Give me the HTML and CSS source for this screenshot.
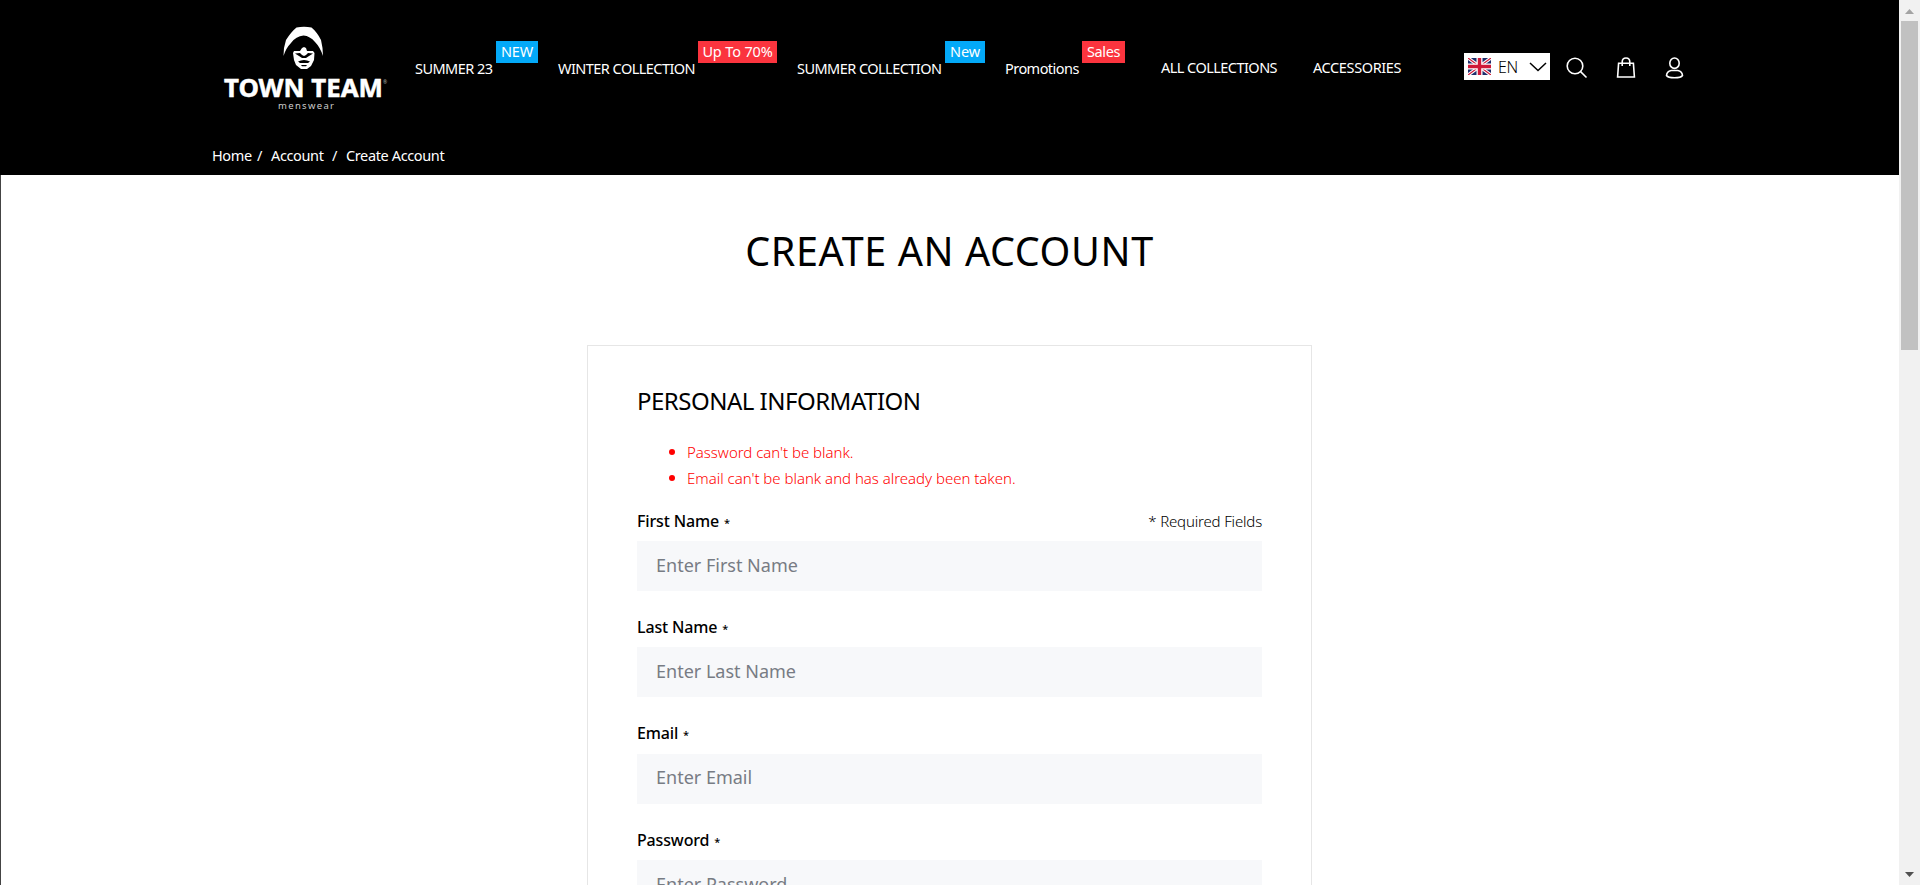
FILE: index.html
```html
<!DOCTYPE html>
<html lang="en">
<head>
<meta charset="utf-8">
<title>Create Account</title>
<link rel="stylesheet" href="styles.css">
</head>
<body>
<div class="viewport">
<div class="page">
  <header class="header">
    <div class="topbar">
      <a class="logo">
        <svg width="164" height="86" viewBox="0 0 164 86">
          <path class="ink" d="M60.500 29 61 21 63 13Q68 5 73.500 .5Q81-.8 88.500 .5Q94 5 98 13L99.500 21 100 29Q97 20 92 15Q87 9 80.500 8.500Q73 9 68 16Q63 21 60.500 29Z"/>
          <path class="ink" d="M70 26 71 24 77 24 79 21 81 20 83 21 84 24 90 24 91.500 26 91 33 88 39 84 42H78L73 38 71 33Z"/>
          <path class="shade" d="M72 26.500 77 26 79 28 81 29 83 28 85 26 90 26.500 86 29 83 31H79L76 29ZM75 34.500Q81 31.500 87 34.500L85 36H77ZM78 38H84L83 39.200H79Z"/>
          <text class="logo-name" x="1" y="70" textLength="159" lengthAdjust="spacingAndGlyphs">TOWN TEAM</text>
          <text class="logo-reg" x="160" y="57">®</text>
          <text class="logo-sub" x="55" y="82" textLength="56">menswear</text>
        </svg>
      </a>
      <nav class="nav">
        <a class="n1">SUMMER 23<span class="badge blue b1">NEW</span></a>
        <a class="n2">WINTER COLLECTION<span class="badge red b2">Up To 70%</span></a>
        <a class="n3">SUMMER COLLECTION<span class="badge blue b3">New</span></a>
        <a class="n4">Promotions<span class="badge red b4">Sales</span></a>
        <a class="n5">ALL COLLECTIONS</a>
        <a class="n6">ACCESSORIES</a>
      </nav>
      <div class="tools">
        <div class="lang">
          <svg width="23" height="17" viewBox="0 0 23 17">
            <path fill="#1d2d6b" d="M0 0H23V17H0Z"/>
            <path stroke="#fff" stroke-width="3.4" d="M0 0 23 17M23 0 0 17"/>
            <path stroke="#cf1938" stroke-width="1.2" d="M0 0 23 17M23 0 0 17"/>
            <path stroke="#fff" stroke-width="6" d="M11.5 0V17M0 8.5H23"/>
            <path stroke="#cf1938" stroke-width="3.4" d="M11.5 0V17M0 8.5H23"/>
          </svg>
          <span class="lang-code">EN</span>
          <svg class="chev" width="18" height="10" viewBox="0 0 18 10"><path d="M1 1 9 8.500 17 1"/></svg>
        </div>
        <svg class="icon" width="22" height="22" viewBox="0 0 22 22"><circle cx="9" cy="9" r="7.8"/><path d="M14.6 14.6 20.500 20.500"/></svg>
        <svg class="icon" width="22" height="22" viewBox="0 0 22 22"><path d="M3.6 6.200H18.400L19.400 20H2.600ZM7.200 9V5Q7.200 1 11 1Q14.800 1 14.800 5V9"/></svg>
        <svg class="icon" width="22" height="22" viewBox="0 0 22 22"><ellipse cx="10.500" cy="6.200" rx="4.700" ry="5.200"/><path d="M7.200 13.500H13.800Q18.300 14.500 18.500 18.500Q17 20.800 10.500 20.800Q4 20.800 2.500 18.500Q2.700 14.500 7.200 13.500Z"/></svg>
      </div>
    </div>
    <div class="crumbs"><a class="c1">Home</a><span class="c2">/</span><a class="c3">Account</a><span class="c2">/</span><a>Create Account</a></div>
  </header>
  <main class="main">
    <h1>CREATE AN ACCOUNT</h1>
    <form class="card">
      <h2>PERSONAL INFORMATION</h2>
      <ul class="errors"><li>Password can't be blank.</li><li>Email can't be blank and has already been taken.</li></ul>
      <div class="field"><div class="row"><label>First Name<i>*</i></label><span class="req">* Required Fields</span></div><div class="input">Enter First Name</div></div>
      <div class="field tall"><div class="row"><label>Last Name<i>*</i></label></div><div class="input">Enter Last Name</div></div>
      <div class="field raised"><div class="row"><label>Email<i>*</i></label></div><div class="input">Enter Email</div></div>
      <div class="field"><div class="row"><label>Password<i>*</i></label></div><div class="input">Enter Password</div></div>
    </form>
  </main>
</div>
<div class="scrollbar">
  <svg width="9" height="5" viewBox="0 0 9 5"><path fill="#a3a3a3" d="M0 5 4.500 0 9 5Z"/></svg>
  <div class="thumb"></div>
  <svg width="9" height="5" viewBox="0 0 9 5"><path fill="#505050" d="M0 0 4.500 5 9 0Z"/></svg>
</div>
</div>
</body>
</html>
```
FILE: styles.css
```css
* { box-sizing: border-box; }
body { margin: 0; background: #fff; color: #000; font-family: "Noto Sans", "Open Sans", sans-serif; }
.viewport { display: flex; height: 885px; overflow: hidden; }
.page { flex: 1; overflow: hidden; white-space: nowrap; }
.header { height: 175px; background: #000; color: #fff; }
.topbar { display: flex; height: 143px; padding-left: 223px; }
.logo { width: 192px; padding-top: 27px; }
.logo svg { display: block; overflow: visible; }
.ink { fill: #fff; }
.shade { fill: #000; }
.logo-name { font: 700 25px "Noto Sans", sans-serif; fill: #fff; stroke: #fff; stroke-width: .5; }
.logo-reg { font: 5px "Noto Sans", sans-serif; fill: #aaa; }
.logo-sub { font: 9.5px "Noto Sans", sans-serif; fill: #ccc; }
.nav { display: flex; width: 1049px; padding-top: 58px; font-size: 14.5px; line-height: 21px; letter-spacing: -.54px; }
.nav a { position: relative; }
.n1 { width: 143px; }
.n2 { width: 239px; }
.n3 { width: 208px; }
.n4 { width: 156px; }
.n5 { width: 152px; margin-top: -1px; }
.n6 { margin-top: -1px; letter-spacing: -.38px; }
.badge { position: absolute; top: -17px; height: 22px; text-align: center; line-height: 21px; letter-spacing: -.15px; }
.blue { background: #03a9f8; }
.red { background: #fb343e; }
.b1 { left: 81px; width: 42px; }
.b2 { left: 140px; width: 79px; }
.b3 { left: 148px; width: 40px; }
.b4 { left: 77px; width: 43px; letter-spacing: -.4px; }
.tools { display: flex; align-items: flex-start; gap: 27px; padding-top: 53px; }
.lang { display: flex; align-items: center; width: 86px; height: 27px; margin-right: -11px; padding-left: 4px; background: #fff; color: #000; font-size: 16px; font-weight: 300; }
.lang-code { width: 38px; padding-left: 7px; letter-spacing: -.3px; }
.chev, .icon { fill: none; stroke: #000; stroke-width: 1.5; }
.icon { margin-top: 4px; stroke: #fff; stroke-width: 1.6; }
.crumbs { display: flex; padding-left: 212px; font-size: 14.5px; line-height: 24px; letter-spacing: -.37px; }
.c1 { width: 45px; }
.c2 { width: 14px; }
.c3 { width: 61px; }
.main { height: 710px; padding: 49px 0 0 586px; border-left: 1px solid #444; }
h1 { width: 725px; margin: 0; text-align: center; font-size: 39.5px; line-height: 54px; font-weight: 400; letter-spacing: .6px; }
.card { width: 725px; height: 600px; margin-top: 67px; padding: 39px 49px; border: 1px solid #e6e6e6; }
h2 { margin: 0; font-size: 24px; line-height: 32px; font-weight: 400; letter-spacing: -.5px; }
.errors { margin: 22px 0 0; padding-left: 32px; color: #f00; font-size: 15px; font-weight: 300; line-height: 26px; list-style: none; letter-spacing: -.02px; }
.errors li { display: flex; align-items: center; gap: 12px; }
.errors li::before { content: ""; width: 6px; height: 6px; border-radius: 50%; background: #f00; }
.field { height: 106px; }
.errors + .field { margin-top: 15px; }
.tall { height: 107px; }
.row { display: flex; justify-content: space-between; height: 35px; line-height: 30px; }
.raised .row { line-height: 28px; }
label { font-size: 16px; font-weight: 500; letter-spacing: -.15px; }
label i { margin-left: 5px; font-size: 11px; font-style: normal; }
.req { font-size: 15px; font-weight: 300; letter-spacing: -.17px; }
.input { height: 50px; padding-left: 19px; background: #f7f8fa; color: #777c84; font-size: 18px; line-height: 48px; }
.raised .input { line-height: 46px; }
.scrollbar { display: flex; flex-direction: column; align-items: center; width: 21px; padding: 9px 0 8px; background: #f1f1f1; }
.thumb { width: 17px; height: 329px; margin: 7px 0 auto; background: #c1c1c1; }
```
